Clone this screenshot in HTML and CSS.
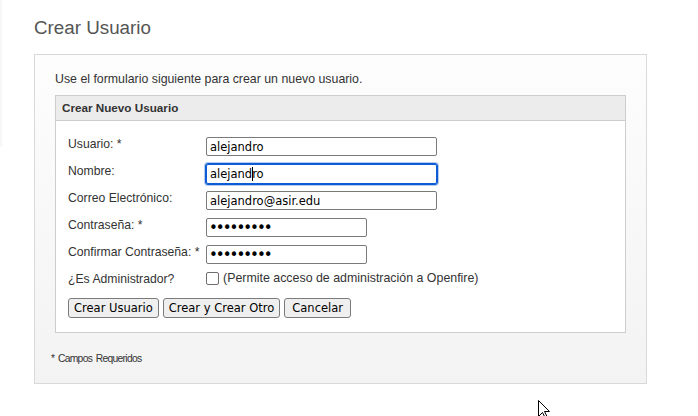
FILE: index.html
```html
<!DOCTYPE html>
<html lang="es">
<head>
<meta charset="utf-8">
<title>Crear Usuario</title>
<link rel="stylesheet" href="styles.css">
</head>
<body>
<div class="page">
  <div class="edge"></div>
  <main class="main">
    <h1 class="title">Crear Usuario</h1>
    <section class="box">
      <p class="intro">Use el formulario siguiente para crear un nuevo usuario.</p>
      <div class="panel">
        <div class="panel-head">Crear Nuevo Usuario</div>
        <div class="panel-body">
          <div class="grid">
            <label class="lbl">Usuario: *</label>
            <div class="fld"><input class="inp wide" type="text" value="alejandro"></div>

            <label class="lbl">Nombre:</label>
            <div class="fld"><span class="focuswrap"><input class="inp wide focused" type="text" value="alejandro"><span class="caret"></span></span></div>

            <label class="lbl">Correo Electrónico:</label>
            <div class="fld"><input class="inp wide" type="text" value="alejandro@asir.edu"></div>

            <label class="lbl">Contraseña: *</label>
            <div class="fld"><input class="inp narrow pass" type="password" value="alejandro"></div>

            <label class="lbl">Confirmar Contraseña: *</label>
            <div class="fld"><input class="inp narrow pass" type="password" value="alejandro"></div>

            <label class="lbl">¿Es Administrador?</label>
            <div class="fld chk-row"><input class="chk" type="checkbox"><span class="chk-text">(Permite acceso de administración a Openfire)</span></div>
          </div>
          <div class="buttons">
            <button class="btn">Crear Usuario</button>
            <button class="btn">Crear y Crear Otro</button>
            <button class="btn">Cancelar</button>
          </div>
        </div>
      </div>
      <p class="foot">* Campos Requeridos</p>
    </section>
  </main>
</div>
<svg class="cursor" width="14" height="20" viewBox="0 0 14 20"><path d="M0.5 0.5 L0.5 16.5 L4.5 12.5 L7.5 18.5 L9.5 17.5 L6.5 11.5 L11.5 11.5 Z" fill="#fff" stroke="#000" stroke-width="1"/></svg>
</body>
</html>
```
FILE: styles.css
```css
html, body {
  margin: 0;
  padding: 0;
  background: #fff;
}
body {
  font-family: "Liberation Sans", Arial, sans-serif;
  color: #333;
  position: relative;
  width: 698px;
  height: 416px;
  overflow: hidden;
}
.page {
  display: flex;
  align-items: flex-start;
}
.edge {
  width: 2px;
  height: 147px;
  background: #f7f7f7;
  flex: none;
}
.main {
  margin-left: 32px;
  width: 613px;
}
.title {
  margin: 17px 0 15px;
  font-size: 18.8px;
  line-height: 22px;
  font-weight: normal;
  color: #555;
}
.box {
  border: 1px solid #d9d9d9;
  background: linear-gradient(#fdfdfd, #f3f3f3);
  padding: 17px 20px 18px;
}
.intro {
  margin: 0 0 9px;
  font-size: 12.35px;
  line-height: 14px;
  color: #333;
}
.panel {
  border: 1px solid #cdcdcd;
  background: #fff;
}
.panel-head {
  background: #ececec;
  border-bottom: 1px solid #cdcdcd;
  padding: 5px 6px;
  font-size: 11.7px;
  line-height: 14px;
  font-weight: bold;
  color: #333;
}
.panel-body {
  padding: 16px 12px 14px;
}
.grid {
  display: grid;
  grid-template-columns: 138px auto;
  grid-auto-rows: 19px;
  row-gap: 8px;
}
.lbl {
  font-size: 12.2px;
  line-height: 12px;
  padding-top: 1px;
  color: #333;
  white-space: nowrap;
}
.fld {
  display: flex;
  align-items: flex-start;
}
.inp {
  box-sizing: border-box;
  height: 19px;
  margin: 0;
  padding: 1px 3px;
  border: 1px solid #7a7a7a;
  border-radius: 2px;
  font-family: "DejaVu Sans", Verdana, sans-serif;
  font-size: 11.5px;
  color: #000;
  background: #fff;
  outline: none;
}
.pass {
  font-size: 15px;
  letter-spacing: -2px;
  padding: 0 3px 0 2px;
}
.wide { width: 231px; }
.narrow { width: 161px; }
.focuswrap {
  position: relative;
  display: inline-block;
}
.focused {
  height: 20px;
  border-color: #0b5cd5;
  outline: 1px solid #0b5cd5;
  box-shadow: 0 0 0 2px #b5cbee;
}
.caret {
  position: absolute;
  left: 46px;
  top: 3px;
  width: 1px;
  height: 14px;
  background: #000;
}
.chk-row {
  align-items: flex-start;
}
.chk {
  appearance: none;
  -webkit-appearance: none;
  box-sizing: border-box;
  width: 13px;
  height: 13px;
  margin: 0;
  border: 1px solid #6f6f6f;
  border-radius: 2px;
  background: #fff;
}
.chk-text {
  margin-left: 4px;
  font-size: 12.4px;
  line-height: 13px;
  color: #333;
  white-space: nowrap;
}
.buttons {
  display: flex;
  gap: 4px;
  margin-top: 7px;
}
.btn {
  box-sizing: border-box;
  height: 20px;
  margin: 0;
  padding: 0 5px;
  border: 1px solid #7b7b7b;
  border-radius: 3px;
  background: #efefef;
  font-family: "DejaVu Sans", Verdana, sans-serif;
  font-size: 11.5px;
  line-height: 16px;
  color: #000;
}
.btn:last-child {
  padding: 0 7px;
}
.foot {
  margin: 20px 0 0 -4px;
  font-size: 10.3px;
  line-height: 12px;
  letter-spacing: -0.7px;
  word-spacing: 1.5px;
  color: #333;
}
.cursor {
  position: absolute;
  left: 538px;
  top: 400px;
}
```
